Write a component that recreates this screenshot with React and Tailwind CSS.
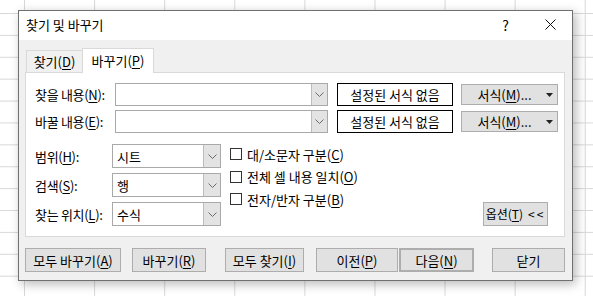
import React from "react";

const Chevron = () => (
  <svg width="9" height="5" viewBox="0 0 9 5">
    <path d="M0.5 0.5 L4.5 4.5 L8.5 0.5" fill="none" stroke="#6a6a6a" strokeWidth="1" />
  </svg>
);

const U = ({ children }) => <span className="underline underline-offset-[2px] decoration-[1px]">{children}</span>;

const Btn = ({ className = "", children }) => (
  <div className={"flex shrink-0 items-center justify-center whitespace-nowrap bg-[#e1e1e1] border border-[#adadad] leading-none text-black " + className}>
    {children}
  </div>
);

const Combo = () => (
  <div className="flex shrink-0 w-[213px] h-[23px] border border-[#a9a9a9] bg-white">
    <div className="flex-1" />
    <div className="w-[16px] h-full bg-[#e3e3e3] border-l border-[#bcbcbc] flex items-center justify-center">
      <Chevron />
    </div>
  </div>
);

const Select = ({ value }) => (
  <div className="flex shrink-0 w-[109px] h-[24px] border border-[#a9a9a9] bg-white">
    <div className="flex-1 flex items-center pl-[4px] text-[13px] leading-none">{value}</div>
    <div className="w-[17px] h-full bg-[#e3e3e3] border-l border-[#bcbcbc] flex items-center justify-center">
      <Chevron />
    </div>
  </div>
);

const Check = ({ children, h }) => (
  <div className={"flex items-center " + h}>
    <div className="w-[12px] h-[12px] border border-[#333333] bg-white" />
    <div className="ml-[5px] text-[13px] leading-none whitespace-nowrap">{children}</div>
  </div>
);

const Label = ({ w, children }) => (
  <div className={"shrink-0 whitespace-nowrap text-[13px] leading-none tracking-[-0.3px] " + w}>{children}</div>
);

export default function App() {
  return (
    <div className="w-[593px] h-[296px] overflow-hidden bg-white bg-[linear-gradient(to_right,#d8d8d8_1px,transparent_1px),linear-gradient(to_bottom,#d8d8d8_1px,transparent_1px)] bg-[size:70.1px_21.9px] bg-[position:24px_13px] pt-[10px] pl-[18px] font-['Noto_Sans_CJK_KR','Noto_Sans',sans-serif] text-black">
      <div className="w-[555px] h-[271px] border border-[#707070] bg-[#f0f0f0] shadow-[3px_3px_10px_rgba(0,0,0,0.28)] flex flex-col">
        {/* title bar */}
        <div className="h-[29px] bg-white flex items-center pl-[7px] pr-[16px] pb-[2px]">
          <div className="text-[13px] leading-none">찾기 및 바꾸기</div>
          <div className="flex-1" />
          <div className="text-[14px] leading-none mr-[36px]">?</div>
          <svg width="11" height="11" viewBox="0 0 11 11">
            <path d="M0.5 0.5 L10.5 10.5 M10.5 0.5 L0.5 10.5" stroke="#111" strokeWidth="1" />
          </svg>
        </div>
        {/* body */}
        <div className="flex-1 pl-[6px] pt-[8px]">
          {/* tabs */}
          <div className="flex items-end h-[24px] ml-[1px] relative z-10">
            <div className="w-[56px] h-[22px] border-t border-l border-[#d9d9d9] flex items-center justify-center whitespace-nowrap text-[13px] leading-none">
              찾기(<U>D</U>)
            </div>
            <div className="w-[72px] h-[25px] -mb-[1px] bg-white border-t border-l border-r border-[#d9d9d9] flex items-center justify-center whitespace-nowrap pb-[2px] text-[13px] leading-none">
              바꾸기(<U>P</U>)
            </div>
          </div>
          {/* panel */}
          <div className="w-[540px] h-[165px] bg-white border border-[#d9d9d9] pt-[10px] pl-[9px]">
            <div className="flex items-center">
              <Label w="w-[80px]">찾을 내용(<U>N</U>):</Label>
              <Combo />
              <div className="shrink-0 ml-[9px] w-[116px] h-[23px] border border-black flex items-center justify-center whitespace-nowrap text-[13px] leading-none">설정된 서식 없음</div>
              <Btn className="ml-[8px] w-[97px] h-[21px] relative text-[13px]">
                <span className="mr-[10px]">서식(<U>M</U>)...</span>
                <svg className="absolute right-[4px] top-[8px]" width="7" height="4" viewBox="0 0 7 4"><path d="M0 0 L7 0 L3.5 4 Z" fill="#222" /></svg>
              </Btn>
            </div>
            <div className="flex items-center mt-[4px]">
              <Label w="w-[80px]">바꿀 내용(<U>E</U>):</Label>
              <Combo />
              <div className="shrink-0 ml-[9px] w-[116px] h-[23px] border border-black flex items-center justify-center whitespace-nowrap text-[13px] leading-none">설정된 서식 없음</div>
              <Btn className="ml-[8px] w-[97px] h-[21px] relative text-[13px]">
                <span className="mr-[10px]">서식(<U>M</U>)...</span>
                <svg className="absolute right-[4px] top-[8px]" width="7" height="4" viewBox="0 0 7 4"><path d="M0 0 L7 0 L3.5 4 Z" fill="#222" /></svg>
              </Btn>
            </div>
            <div className="flex mt-[10px] pr-[16px]">
              <div className="flex flex-col pt-[1px] gap-[5px]">
                <div className="flex items-center">
                  <Label w="w-[77px]">범위(<U>H</U>):</Label>
                  <Select value="시트" />
                </div>
                <div className="flex items-center">
                  <Label w="w-[77px]">검색(<U>S</U>):</Label>
                  <Select value="행" />
                </div>
                <div className="flex items-center">
                  <Label w="w-[77px]">찾는 위치(<U>L</U>):</Label>
                  <Select value="수식" />
                </div>
              </div>
              <div className="flex flex-col ml-[9px]">
                <Check h="h-[22px]">대/소문자 구분(<U>C</U>)</Check>
                <Check h="h-[23px]">전체 셀 내용 일치(<U>O</U>)</Check>
                <Check h="h-[22px]">전자/반자 구분(<U>B</U>)</Check>
              </div>
              <div className="flex-1 flex items-end justify-end">
                <Btn className="w-[65px] h-[24px] text-[12px]">
                  옵션(<U>T</U>)<span className="ml-[5px] tracking-[2px]">&lt;&lt;</span>
                </Btn>
              </div>
            </div>
          </div>
          {/* bottom buttons */}
          <div className="flex mt-[11px] text-[13px]">
            <Btn className="w-[96px] h-[24px]">모두 바꾸기(<U>A</U>)</Btn>
            <Btn className="ml-[11px] w-[74px] h-[24px]">바꾸기(<U>R</U>)</Btn>
            <Btn className="ml-[19px] w-[79px] h-[24px]">모두 찾기(<U>I</U>)</Btn>
            <Btn className="ml-[12px] w-[82px] h-[24px]">이전(<U>P</U>)</Btn>
            <Btn className="ml-[1px] w-[75px] h-[24px] border-2 border-[#0078d7]">다음(<U>N</U>)</Btn>
            <Btn className="ml-[18px] w-[73px] h-[24px]">닫기</Btn>
          </div>
        </div>
      </div>
    </div>
  );
}
